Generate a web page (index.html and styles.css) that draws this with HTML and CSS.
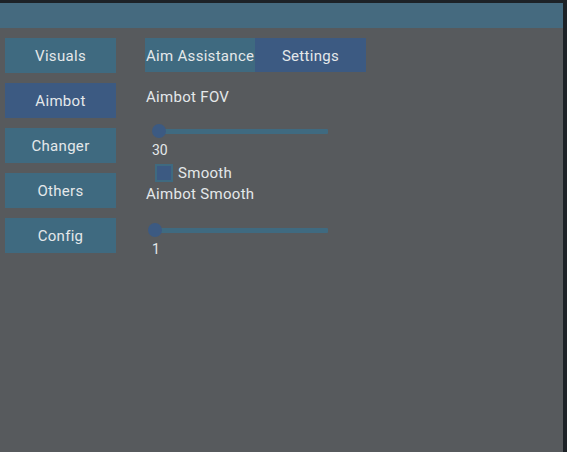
FILE: index.html
```html
<!DOCTYPE html>
<html>
<head>
<meta charset="utf-8">
<link rel="stylesheet" href="styles.css">
</head>
<body>
<div class="screen">
  <div class="window">
    <div class="titlebar"></div>
    <div class="content">
      <nav class="sidebar">
        <div class="navbtn">Visuals</div>
        <div class="navbtn active">Aimbot</div>
        <div class="navbtn">Changer</div>
        <div class="navbtn">Others</div>
        <div class="navbtn">Config</div>
      </nav>
      <main class="panel">
        <div class="tabs">
          <div class="tab">Aim Assistance</div>
          <div class="tab active">Settings</div>
        </div>
        <div class="label first">Aimbot FOV</div>
        <div class="slider s1">
          <div class="track"></div>
          <div class="knob k1"></div>
        </div>
        <div class="value">30</div>
        <div class="check">
          <span class="box"></span>
          <span class="checklabel">Smooth</span>
        </div>
        <div class="label second">Aimbot Smooth</div>
        <div class="slider s2">
          <div class="track"></div>
          <div class="knob k2"></div>
        </div>
        <div class="value">1</div>
      </main>
    </div>
  </div>
  <div class="edge"></div>
</div>
</body>
</html>
```
FILE: styles.css
```css
html, body {
  margin: 0;
  padding: 0;
  background: #1d2227;
  width: 567px;
  height: 452px;
  overflow: hidden;
  font-family: Roboto, "Noto Sans", sans-serif;
  color: #e4e8ea;
}
.screen {
  display: flex;
  padding-top: 3px;
  height: 449px;
}
.window {
  width: 563px;
  display: flex;
  flex-direction: column;
  background: #575a5d;
}
.edge {
  flex: 1;
  background: #1d2227;
}
.titlebar {
  height: 25px;
  background: #456a7f;
}
.content {
  display: flex;
  padding: 10px 0 0 5px;
  flex: 1;
}
.sidebar {
  display: flex;
  flex-direction: column;
  gap: 10px;
  width: 111px;
}
.navbtn {
  height: 34px;
  padding-top: 1px;
  display: flex;
  align-items: center;
  justify-content: center;
  background: #3f6a80;
  font-size: 15px;
  letter-spacing: 0.3px;
}
.navbtn.active {
  background: #3c5a82;
}
.panel {
  margin-left: 29px;
  display: flex;
  flex-direction: column;
  align-items: flex-start;
}
.tabs {
  display: flex;
  height: 34px;
}
.tab {
  width: 110px;
  padding-top: 1px;
  display: flex;
  align-items: center;
  justify-content: center;
  background: #3f6a80;
  font-size: 15px;
  letter-spacing: 0.3px;
  white-space: nowrap;
}
.tab:first-child {
  justify-content: flex-start;
  padding-left: 1px;
  width: 109px;
}
.tab.active {
  background: #3c5a82;
  width: 111px;
}
.label {
  margin-left: 1px;
  font-size: 15px;
  line-height: 20px;
  letter-spacing: 0.3px;
}
.label.first {
  margin-top: 15px;
}
.label.second {
  margin-top: 2px;
}
.slider {
  position: relative;
  width: 181px;
  height: 14px;
  margin-left: 2px;
}
.s1 { margin-top: 17px; }
.s2 { margin-top: 19px; }
.track {
  position: absolute;
  left: 6px;
  right: 0;
  top: 5px;
  height: 5px;
  background: #3f6a80;
  border-radius: 1px;
}
.knob {
  position: absolute;
  top: 0;
  width: 14px;
  height: 14px;
  border-radius: 50%;
  background: #3c5a82;
}
.k1 { left: 5px; }
.k2 { left: 1px; }
.value {
  margin-left: 7px;
  margin-top: 2px;
  font-size: 14px;
  line-height: 20px;
}
.check {
  display: flex;
  align-items: center;
  margin-left: 10px;
  margin-top: 4px;
  height: 18px;
}
.box {
  width: 14px;
  height: 14px;
  border: 2px solid #3f6a80;
  background: #3c5a82;
}
.checklabel {
  margin-left: 5px;
  font-size: 15px;
  letter-spacing: 0.3px;
}
```
